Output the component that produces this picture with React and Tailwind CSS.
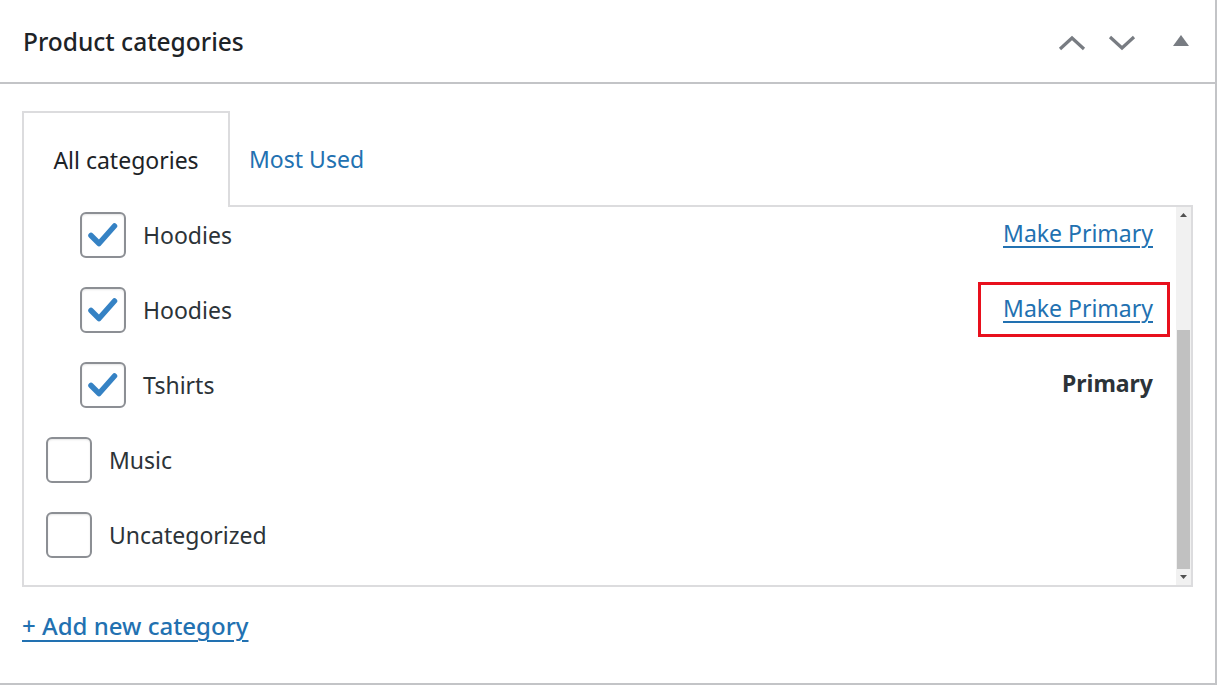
import React from "react";

const font = { fontFamily: '"Noto Sans", "Open Sans", sans-serif' };

function Check() {
  return (
    <svg width="30" height="30" viewBox="0 0 30 30">
      <path d="M3 15.5 L11 23.5 L26.5 6" fill="none" stroke="#3582c4" strokeWidth="5.5" strokeLinecap="round" strokeLinejoin="round" />
    </svg>
  );
}

function Box({ checked }) {
  return (
    <div className="w-[46px] h-[46px] shrink-0 rounded-[6px] border-2 border-[#8c8f94] bg-white flex items-center justify-center shadow-[inset_0_1px_2px_rgba(0,0,0,0.1)]">
      {checked && <Check />}
    </div>
  );
}

function Row({ label, checked, nested, right }) {
  return (
    <div className={`flex items-center h-[46px] ${nested ? "pl-[56px]" : "pl-[22px]"}`}>
      <Box checked={checked} />
      <span className="ml-[17px] text-[23px] text-[#2c3338] leading-none">{label}</span>
      <div className="ml-auto">{right}</div>
    </div>
  );
}

function MakePrimary({ boxed }) {
  return (
    <span className="relative inline-block">
      <a className="text-[23px] text-[#2271b1] underline underline-offset-[4px] decoration-[2px] leading-none cursor-pointer">Make Primary</a>
      {boxed && (
        <span className="absolute left-[-25px] right-[-17px] top-[-15px] bottom-[-14px] border-[3px] border-[#e8101d] pointer-events-none" />
      )}
    </span>
  );
}

export default function App() {
  return (
    <div className="w-[1220px] h-[686px] bg-white" style={font}>
      <div className="w-[1217px] h-[685px] border-r-2 border-b-2 border-[#c3c4c7] flex flex-col">
        <div className="h-[84px] shrink-0 border-b-2 border-[#c3c4c7] flex items-center pl-[23px] pr-[26px]">
          <h2 className="text-[24.5px] font-medium text-[#1d2327] leading-none mt-[3px]">Product categories</h2>
          <div className="ml-auto flex items-center mt-[4px]">
            <svg width="28" height="18" viewBox="0 0 28 18" className="mr-[22px]">
              <path d="M2 15 L14 4 L26 15" fill="none" stroke="#787c82" strokeWidth="3.2" />
            </svg>
            <svg width="28" height="18" viewBox="0 0 28 18" className="mr-[37px]">
              <path d="M2 3 L14 14 L26 3" fill="none" stroke="#787c82" strokeWidth="3.2" />
            </svg>
            <svg width="16" height="12" viewBox="0 0 16 12" className="-mt-[6px]">
              <path d="M0 12 L8 1 L16 12 Z" fill="#787c82" />
            </svg>
          </div>
        </div>

        <div className="px-[22px] pt-[25px] flex flex-col">
          <div className="flex items-end">
            <div className="relative z-10 -mb-[2px] w-[208px] h-[96px] border-2 border-b-0 border-[#dcdcde] bg-white flex items-center justify-center">
              <span className="text-[23px] text-[#1d2327] leading-none">All categories</span>
            </div>
            <div className="h-[96px] flex items-center pl-[19px] pt-[5px]">
              <span className="text-[23px] text-[#2271b1] leading-none">Most Used</span>
            </div>
          </div>

          <div className="h-[382px] border-2 border-[#dcdcde] flex">
            <div className="flex-1 flex flex-col gap-[29px] pt-[5px] pr-[23px]">
              <Row label="Hoodies" checked nested right={<MakePrimary />} />
              <Row label="Hoodies" checked nested right={<MakePrimary boxed />} />
              <Row label="Tshirts" checked nested right={<span className="text-[23px] font-bold text-[#2c3338] leading-none">Primary</span>} />
              <Row label="Music" />
              <Row label="Uncategorized" />
            </div>
            <div className="w-[15px] bg-[#f1f1f1] flex flex-col">
              <div className="h-[16px] flex items-center justify-center">
                <svg width="7" height="4" viewBox="0 0 7 4"><path d="M0 4 L3.5 0 L7 4Z" fill="#505050" /></svg>
              </div>
              <div className="flex-1 flex flex-col">
                <div className="h-[107px]" />
                <div className="flex-1 mx-[1px] bg-[#c1c1c1]" />
              </div>
              <div className="h-[16px] flex items-center justify-center">
                <svg width="7" height="4" viewBox="0 0 7 4"><path d="M0 0 L3.5 4 L7 0Z" fill="#505050" /></svg>
              </div>
            </div>
          </div>

          <div className="mt-[27px]">
            <a className="text-[24px] font-medium text-[#2271b1] underline underline-offset-[5px] decoration-[2px] leading-none cursor-pointer">+ Add new category</a>
          </div>
        </div>
      </div>
    </div>
  );
}
